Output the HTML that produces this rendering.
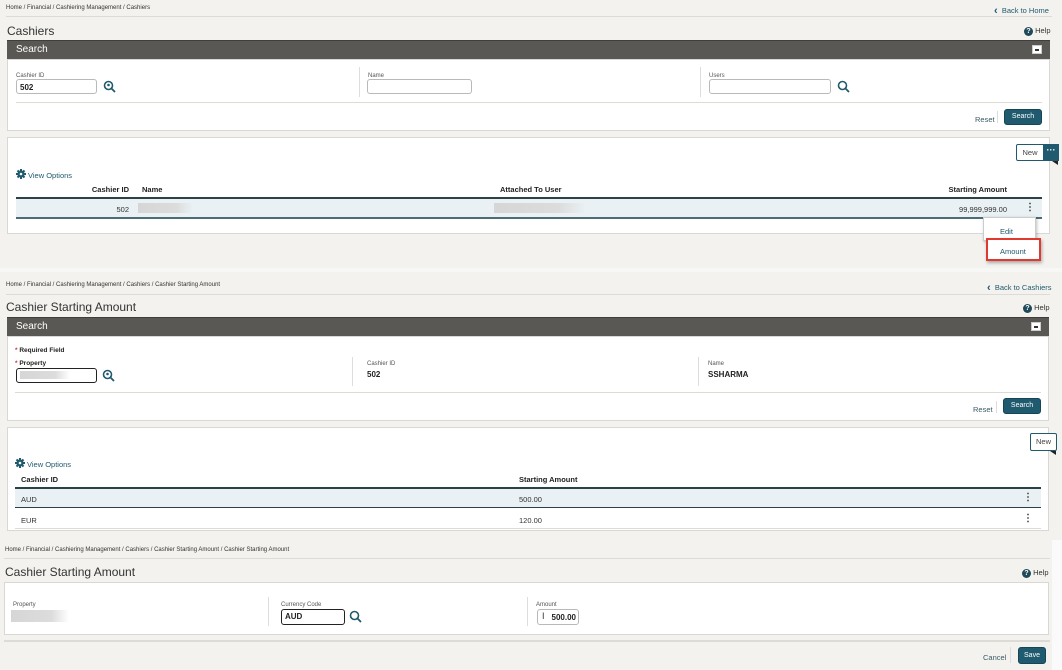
<!DOCTYPE html>
<html><head><meta charset="utf-8">
<style>
*{margin:0;padding:0;box-sizing:border-box}
body{width:1062px;height:670px;background:#f3f2ee;font-family:"Liberation Sans",sans-serif;color:#222;position:relative;overflow:hidden;font-size:7px}
.a{position:absolute}
.crumb{font-size:6px;color:#333;margin-top:1px}
.hl{height:1px;background:#dcdbd6}
.title{font-size:12px;color:#333;margin-top:1px}
.bar{background:#5a5854;color:#fff;font-size:10px;padding:3px 0 0 9px;border-top:1px solid #3f3e3b}
.panel{background:#fff;border:1px solid #d9d8d4}
.lbl{font-size:6px;color:#555;margin-top:2px}
.inp{border:1px solid #b9b9b9;border-radius:3px;background:#fff;font-size:8px;font-weight:bold;padding:3px 3px}
.inpd{border:1.5px solid #222;border-radius:3px;background:#fff;font-size:8px;font-weight:bold;padding:2px 3px}
.vl{width:1px;background:#ddd}
.btn{background:#1f5a6e;color:#fff;font-size:7px;border-radius:3px;text-align:center;border:1px solid #164656}
.link{color:#1f5a6e;font-size:7.5px;margin-top:1.5px}
.th{font-size:7.5px;font-weight:bold;color:#222;margin-top:1.5px}
.blur{background:linear-gradient(90deg,#d6d6d6,#dcdcdc 70%,rgba(230,230,230,0));height:10px}
.kb{font-size:10px;font-weight:bold;color:#333;line-height:8px}
.chev{font-size:11px;font-weight:bold;vertical-align:-1px}
</style></head><body>

<!-- SECTION 1 -->
<div class="a crumb" style="left:6px;top:4px">Home / Financial / Cashiering Management / Cashiers</div>
<div class="a link" style="left:994px;top:3px"><span class="chev">&#x2039;</span>&nbsp; Back to Home</div>
<div class="a hl" style="left:6px;top:16px;width:1046px"></div>
<div class="a title" style="left:7px;top:23px">Cashiers</div>
<div class="a" style="left:1024px;top:26px;font-size:7.5px;color:#333"><span style="display:inline-block;width:9px;height:9px;border-radius:50%;background:#1f4a5a;color:#fff;font-size:7px;text-align:center;line-height:9px;font-weight:bold">?</span> Help</div>
<div class="a bar" style="left:7px;top:40px;width:1043px;height:19px">Search</div>
<div class="a" style="left:1032px;top:45px;width:10px;height:9px;background:#fff;border:1px solid #ccc"><div style="margin:3px 2px;height:1.5px;background:#333"></div></div>
<div class="a panel" style="left:7px;top:59px;width:1043px;height:72px"></div>
<div class="a lbl" style="left:16px;top:71px">Cashier ID</div>
<div class="a inp" style="left:16px;top:79px;width:81px;height:15px">502</div>
<svg class="a" style="left:103px;top:80px" width="14" height="13" viewBox="0 0 14 13"><circle cx="5.5" cy="5.5" r="4" fill="none" stroke="#1f5a6e" stroke-width="1.6"/><line x1="8.5" y1="8.5" x2="12" y2="12" stroke="#1f5a6e" stroke-width="1.8"/><circle cx="5.5" cy="5" r="1.3" fill="#1f5a6e"/></svg>
<div class="a vl" style="left:359px;top:67px;height:30px"></div>
<div class="a lbl" style="left:368px;top:71px">Name</div>
<div class="a inp" style="left:367px;top:79px;width:105px;height:15px"></div>
<div class="a vl" style="left:700px;top:67px;height:30px"></div>
<div class="a lbl" style="left:709px;top:71px">Users</div>
<div class="a inp" style="left:709px;top:79px;width:122px;height:15px"></div>
<svg class="a" style="left:837px;top:80px" width="13" height="13" viewBox="0 0 13 13"><circle cx="5.5" cy="5.5" r="4" fill="none" stroke="#1f5a6e" stroke-width="1.6"/><line x1="8.5" y1="8.5" x2="12" y2="12" stroke="#1f5a6e" stroke-width="1.8"/></svg>
<div class="a hl" style="left:16px;top:102px;width:1026px"></div>
<div class="a link" style="left:975px;top:113px;color:#3a5a66">Reset</div>
<div class="a vl" style="left:997px;top:111px;height:12px"></div>
<div class="a btn" style="left:1004px;top:109px;width:38px;height:16px;line-height:14px">Search</div>

<div class="a panel" style="left:7px;top:137px;width:1043px;height:97px"></div>
<div class="a" style="left:1016px;top:144px;width:28px;height:17px;border:1px solid #1f5a6e;background:#fff;font-size:7.5px;text-align:center;line-height:15px;color:#444;border-radius:2px 0 0 2px">New</div>
<div class="a" style="left:1043px;top:144px;width:16px;height:17px;background:#1f5a6e;color:#fff;font-size:9px;text-align:center;line-height:12px;font-weight:bold">···</div>
<div class="a" style="left:1052px;top:161px;width:0;height:0;border-top:4px solid #222;border-left:6px solid transparent"></div>
<svg class="a" style="left:16px;top:169px" width="10" height="10" viewBox="0 0 10 10"><circle cx="5" cy="5" r="3.6" fill="#1f5a6e"/><g stroke="#1f5a6e" stroke-width="2"><line x1="5" y1="0" x2="5" y2="10"/><line x1="0" y1="5" x2="10" y2="5"/><line x1="1.5" y1="1.5" x2="8.5" y2="8.5"/><line x1="8.5" y1="1.5" x2="1.5" y2="8.5"/></g><circle cx="5" cy="5" r="1.3" fill="#fff"/></svg>
<div class="a link" style="left:28px;top:169px">View Options</div>
<div class="a th" style="left:80px;top:183px;width:49px;text-align:right">Cashier ID</div>
<div class="a th" style="left:142px;top:183px">Name</div>
<div class="a th" style="left:500px;top:183px">Attached To User</div>
<div class="a th" style="left:900px;top:183px;width:107px;text-align:right">Starting Amount</div>
<div class="a" style="left:16px;top:197px;width:1026px;height:2px;background:#2b4146"></div>
<div class="a" style="left:16px;top:199px;width:1026px;height:18px;background:#e9f1f4"></div>
<div class="a" style="left:80px;top:205px;width:49px;text-align:right;font-size:7.5px;color:#333">502</div>
<div class="a blur" style="left:138px;top:203px;width:55px"></div>
<div class="a blur" style="left:494px;top:203px;width:92px"></div>
<div class="a" style="left:900px;top:205px;width:107px;text-align:right;font-size:7.5px;color:#333">99,999,999.00</div>
<div class="a kb" style="left:1025px;top:204px">⋮</div>
<div class="a" style="left:16px;top:217px;width:1026px;height:2px;background:#4d6c74"></div>
<div class="a" style="left:983px;top:217px;width:53px;height:24px;background:#fff;border:1px solid #ccc;box-shadow:1px 1px 3px rgba(0,0,0,.25)"></div>
<div class="a link" style="left:1000px;top:225px">Edit</div>
<div class="a" style="left:986px;top:238px;width:55px;height:23px;border:2px solid #e0392f;background:#fff;box-shadow:1px 2px 3px rgba(0,0,0,.3)"></div>
<div class="a link" style="left:1000px;top:245px">Amount</div>

<!-- SECTION 2 -->
<div class="a" style="left:0;top:268px;width:1062px;height:4px;background:#f7f7f5"></div>
<div class="a crumb" style="left:6px;top:281px">Home / Financial / Cashiering Management / Cashiers / Cashier Starting Amount</div>
<div class="a link" style="left:987px;top:280px"><span class="chev">&#x2039;</span>&nbsp; Back to Cashiers</div>
<div class="a hl" style="left:6px;top:294px;width:1044px"></div>
<div class="a title" style="left:6px;top:299px">Cashier Starting Amount</div>
<div class="a" style="left:1023px;top:303px;font-size:7.5px;color:#333"><span style="display:inline-block;width:9px;height:9px;border-radius:50%;background:#1f4a5a;color:#fff;font-size:7px;text-align:center;line-height:9px;font-weight:bold">?</span> Help</div>
<div class="a bar" style="left:7px;top:317px;width:1042px;height:19px">Search</div>
<div class="a" style="left:1031px;top:322px;width:10px;height:9px;background:#fff;border:1px solid #ccc"><div style="margin:3px 2px;height:1.5px;background:#333"></div></div>
<div class="a panel" style="left:7px;top:336px;width:1042px;height:85px"></div>
<div class="a" style="left:15px;top:347px;font-size:6.5px;font-weight:bold"><span style="color:#c33">*</span> Required Field</div>
<div class="a" style="left:15px;top:360px;font-size:6.5px;font-weight:bold"><span style="color:#c33">*</span> Property</div>
<div class="a inpd" style="left:16px;top:368px;width:81px;height:15px"><div class="blur" style="width:50px;height:8px"></div></div>
<svg class="a" style="left:102px;top:369px" width="14" height="13" viewBox="0 0 14 13"><circle cx="5.5" cy="5.5" r="4" fill="none" stroke="#1f5a6e" stroke-width="1.6"/><line x1="8.5" y1="8.5" x2="12" y2="12" stroke="#1f5a6e" stroke-width="1.8"/><circle cx="5.5" cy="5" r="1.3" fill="#1f5a6e"/></svg>
<div class="a vl" style="left:352px;top:357px;height:29px"></div>
<div class="a lbl" style="left:367px;top:359px">Cashier ID</div>
<div class="a" style="left:367px;top:370px;font-size:8px;font-weight:bold">502</div>
<div class="a vl" style="left:698px;top:357px;height:29px"></div>
<div class="a lbl" style="left:708px;top:359px">Name</div>
<div class="a" style="left:708px;top:370px;font-size:8px;font-weight:bold">SSHARMA</div>
<div class="a hl" style="left:15px;top:392px;width:1026px"></div>
<div class="a link" style="left:973px;top:403px;color:#3a5a66">Reset</div>
<div class="a vl" style="left:996px;top:401px;height:12px"></div>
<div class="a btn" style="left:1003px;top:398px;width:38px;height:16px;line-height:14px">Search</div>

<div class="a panel" style="left:7px;top:427px;width:1042px;height:104px"></div>
<div class="a" style="left:1030px;top:433px;width:27px;height:18px;border:1px solid #1f5a6e;background:#fff;font-size:7.5px;text-align:center;line-height:16px;color:#444;border-radius:2px">New</div>
<div class="a" style="left:1050px;top:451px;width:0;height:0;border-top:4px solid #222;border-left:6px solid transparent"></div>
<svg class="a" style="left:15px;top:458px" width="10" height="10" viewBox="0 0 10 10"><circle cx="5" cy="5" r="3.6" fill="#1f5a6e"/><g stroke="#1f5a6e" stroke-width="2"><line x1="5" y1="0" x2="5" y2="10"/><line x1="0" y1="5" x2="10" y2="5"/><line x1="1.5" y1="1.5" x2="8.5" y2="8.5"/><line x1="8.5" y1="1.5" x2="1.5" y2="8.5"/></g><circle cx="5" cy="5" r="1.3" fill="#fff"/></svg>
<div class="a link" style="left:27px;top:458px">View Options</div>
<div class="a th" style="left:21px;top:473px">Cashier ID</div>
<div class="a th" style="left:519px;top:473px">Starting Amount</div>
<div class="a" style="left:15px;top:487px;width:1026px;height:2px;background:#2b4146"></div>
<div class="a" style="left:15px;top:489px;width:1026px;height:18px;background:#e9f1f4"></div>
<div class="a" style="left:21px;top:495px;font-size:7.5px;color:#333">AUD</div>
<div class="a" style="left:519px;top:495px;font-size:7.5px;color:#333">500.00</div>
<div class="a kb" style="left:1023px;top:494px">⋮</div>
<div class="a" style="left:15px;top:507px;width:1026px;height:1px;background:#2b4146"></div>
<div class="a" style="left:21px;top:516px;font-size:7.5px;color:#333">EUR</div>
<div class="a" style="left:519px;top:516px;font-size:7.5px;color:#333">120.00</div>
<div class="a kb" style="left:1023px;top:515px">⋮</div>
<div class="a hl" style="left:15px;top:528px;width:1026px"></div>

<!-- SECTION 3 -->
<div class="a" style="left:1052px;top:540px;width:10px;height:130px;background:#fafafa"></div>
<div class="a crumb" style="left:5px;top:546px">Home / Financial / Cashiering Management / Cashiers / Cashier Starting Amount / Cashier Starting Amount</div>
<div class="a hl" style="left:4px;top:558px;width:1046px"></div>
<div class="a title" style="left:5px;top:564px">Cashier Starting Amount</div>
<div class="a" style="left:1022px;top:568px;font-size:7.5px;color:#333"><span style="display:inline-block;width:9px;height:9px;border-radius:50%;background:#1f4a5a;color:#fff;font-size:7px;text-align:center;line-height:9px;font-weight:bold">?</span> Help</div>
<div class="a panel" style="left:4px;top:582px;width:1045px;height:53px"></div>
<div class="a lbl" style="left:13px;top:600px">Property</div>
<div class="a blur" style="left:11px;top:610px;width:58px;height:12px"></div>
<div class="a vl" style="left:268px;top:597px;height:29px"></div>
<div class="a lbl" style="left:281px;top:600px">Currency Code</div>
<div class="a inpd" style="left:281px;top:609px;width:64px;height:16px">AUD</div>
<svg class="a" style="left:349px;top:610px" width="13" height="13" viewBox="0 0 13 13"><circle cx="5.5" cy="5.5" r="4" fill="none" stroke="#1f5a6e" stroke-width="1.6"/><line x1="8.5" y1="8.5" x2="12" y2="12" stroke="#1f5a6e" stroke-width="1.8"/></svg>
<div class="a vl" style="left:527px;top:597px;height:29px"></div>
<div class="a lbl" style="left:536px;top:600px">Amount</div>
<div class="a inp" style="left:537px;top:609px;width:42px;height:16px;text-align:right;padding:3px 2px">500.00</div>
<div class="a" style="left:542px;top:611px;font-size:9px;color:#333">I</div>
<div class="a" style="left:4px;top:640px;width:1046px;height:2px;background:#dcdbd6"></div>
<div class="a link" style="left:983px;top:651px;color:#3a5a66">Cancel</div>
<div class="a vl" style="left:1010px;top:647px;height:16px"></div>
<div class="a btn" style="left:1018px;top:647px;width:28px;height:17px;line-height:15px">Save</div>
</body></html>
